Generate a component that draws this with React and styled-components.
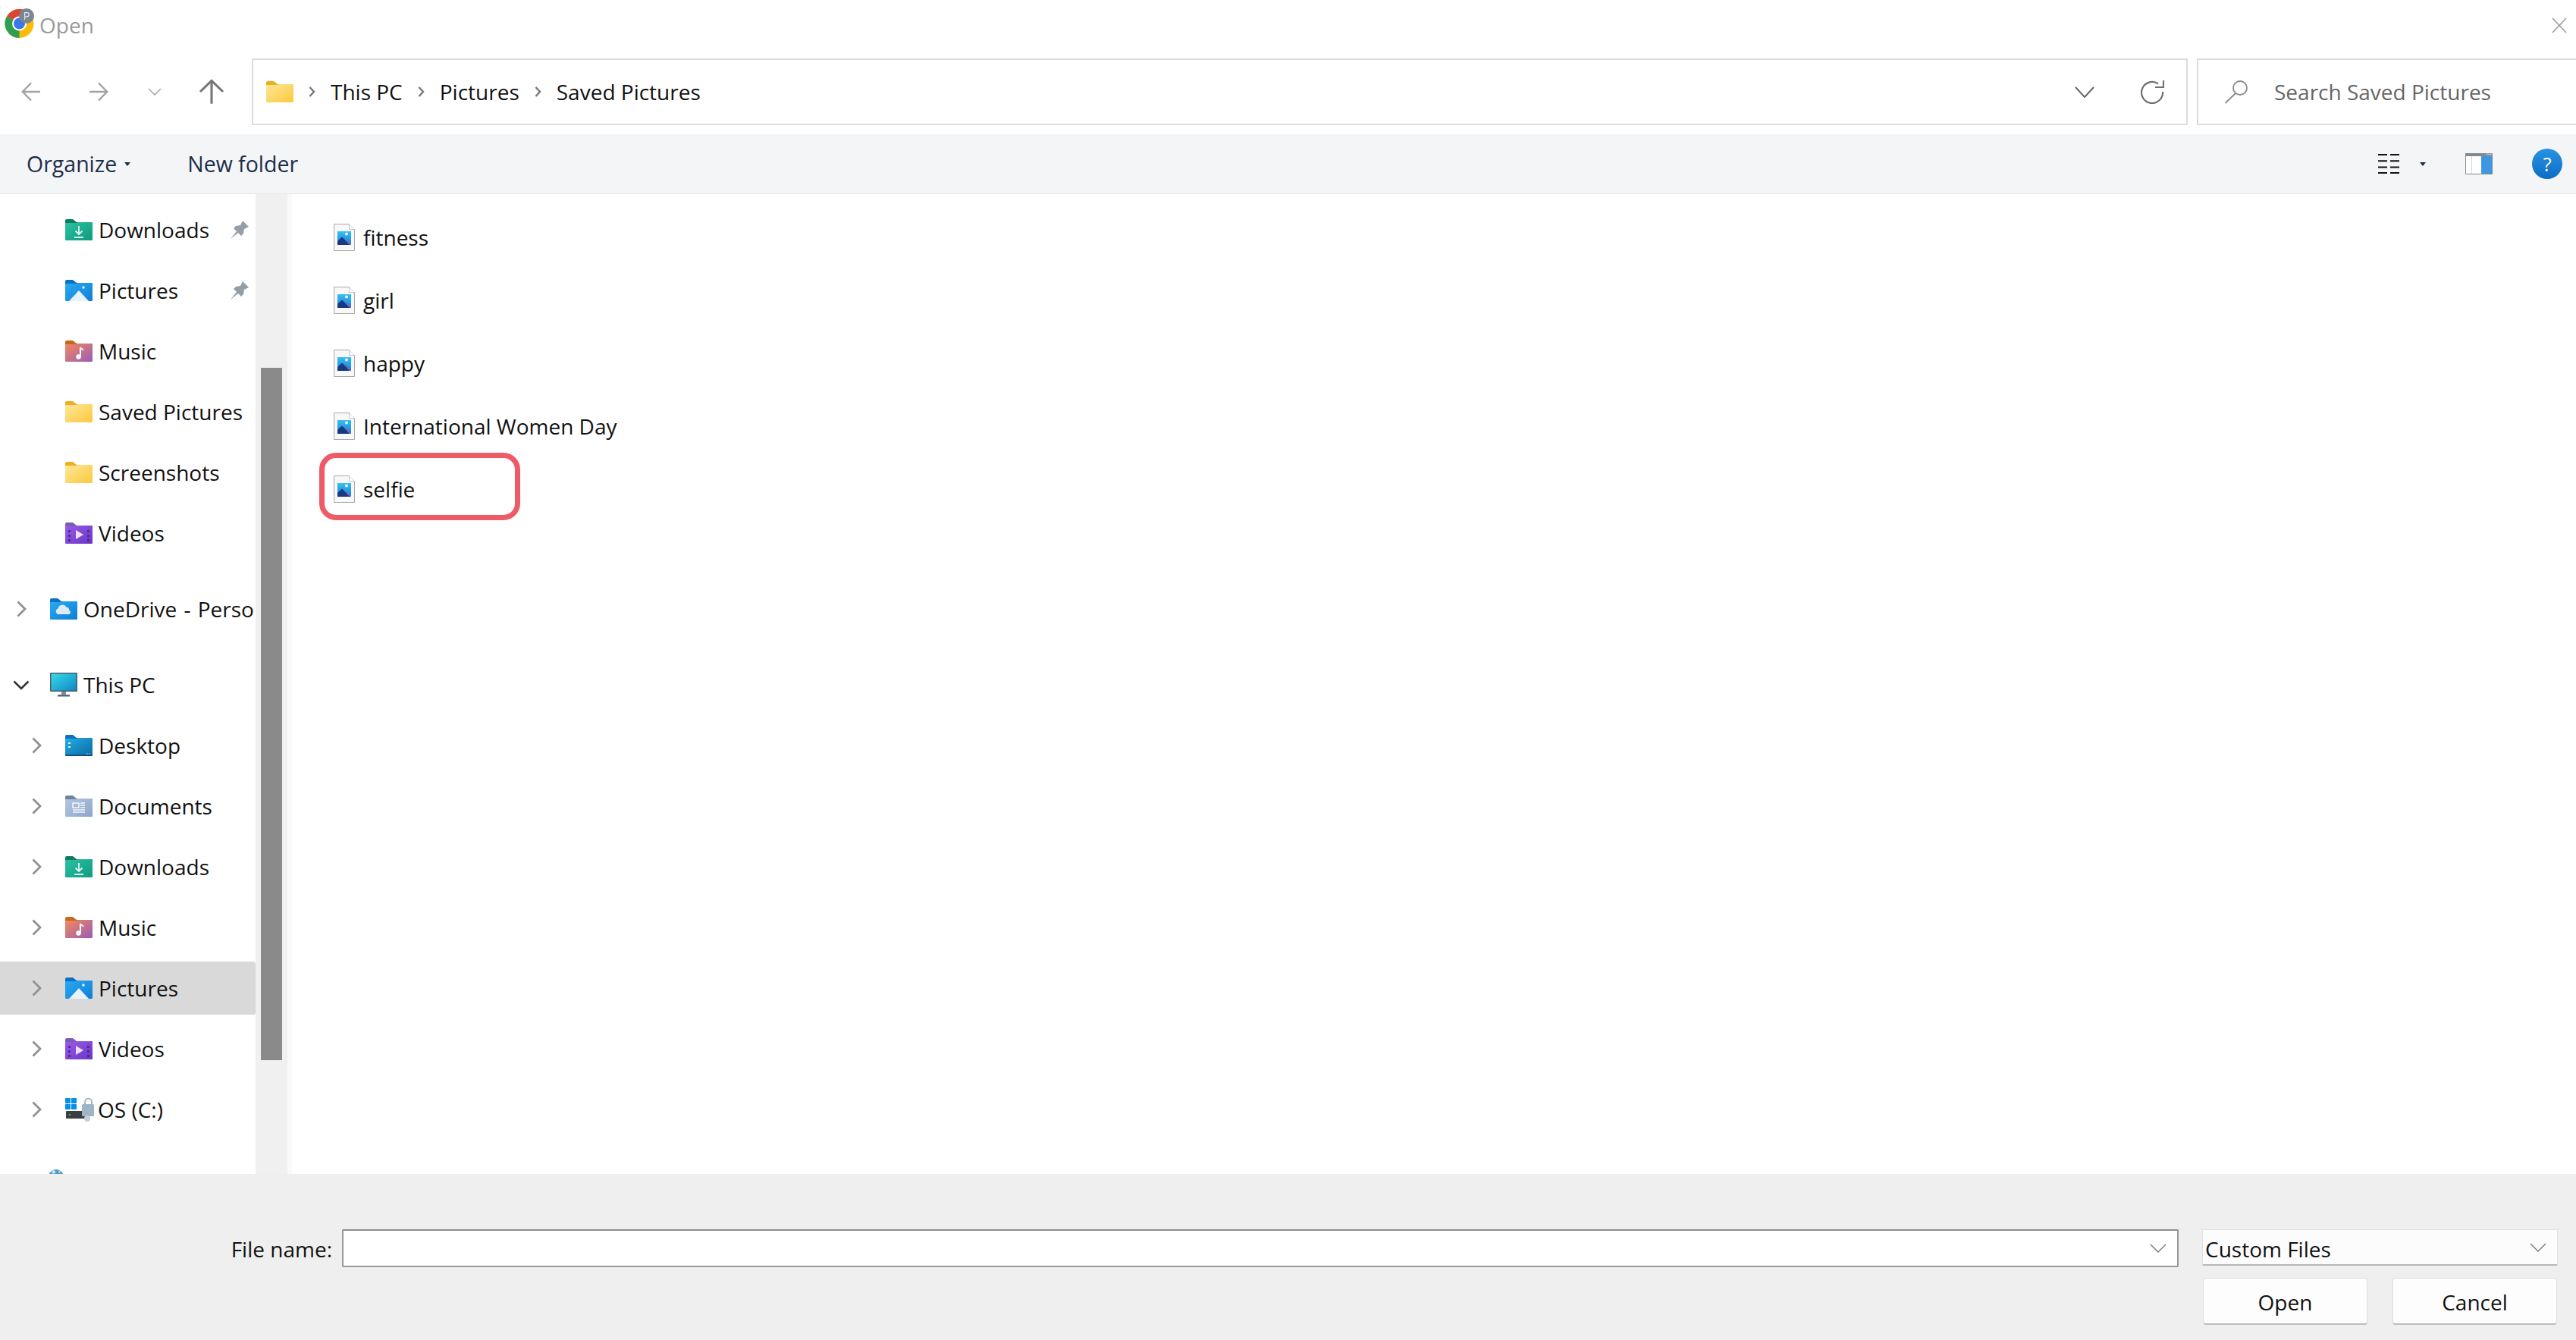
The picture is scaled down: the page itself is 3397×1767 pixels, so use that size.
import React from "react"
import styled, { createGlobalStyle } from "styled-components"

const GlobalStyle = createGlobalStyle`
  html, body {
    margin: 0;
    padding: 0;
    background: #fff;
    overflow: hidden;
  }
  body {
    font-family: "Open Sans", "Noto Sans", "Liberation Sans", sans-serif;
    font-size: 28px;
    color: #111;
  }
`

const Dialog = styled.div`
  display: flex;
  flex-direction: column;
  width: 3397px;
  height: 1767px;
  overflow: hidden;
`

const TitleBar = styled.div`
  display: flex;
  align-items: center;
  height: 66px;
  padding: 0 12px 0 6px;
  color: #9a9a9a;
`

const TitleText = styled.span`
  margin-left: 6px;
  margin-right: auto;
`

const NavBar = styled.div`
  display: flex;
  align-items: stretch;
  height: 88px;
  margin-top: 11px;
  margin-bottom: 12px;
`

const NavSlot = styled.div`
  display: flex;
  align-items: center;
  justify-content: center;
  width: ${p => p.$w}px;
`

const AddressBox = styled.div`
  flex: 1;
  display: flex;
  align-items: center;
  margin-left: 4px;
  padding: 0 29px 0 17px;
  border: 2px solid #dcdcdc;
  gap: 20px;
`

const AddressEnd = styled.div`
  display: flex;
  align-items: center;
  gap: 60px;
  margin-left: auto;
`

const SearchBox = styled.div`
  display: flex;
  align-items: center;
  width: 500px;
  box-sizing: border-box;
  margin-left: 12px;
  padding-left: 34px;
  gap: 34px;
  border: 2px solid #dcdcdc;
  border-right: none;
  color: #666;
`

const Toolbar = styled.div`
  display: flex;
  align-items: center;
  height: 78px;
  padding: 0 18px 0 35px;
  background: #f4f5f7;
  border-bottom: 1px solid #e6e6e6;
  color: #1c2e4a;
  font-size: 28.5px;
`

const ToolbarGroup = styled.div`
  display: flex;
  align-items: center;
  gap: ${p => p.$gap}px;
  margin-left: ${p => p.$auto ? "auto" : `${p.$left || 0}px`};
`

const Caret = styled.span`
  width: 0;
  height: 0;
  border-left: 4px solid transparent;
  border-right: 4px solid transparent;
  border-top: 5px solid #1c2e4a;
`

const Help = styled.span`
  display: flex;
  align-items: center;
  justify-content: center;
  width: 40px;
  height: 40px;
  border-radius: 50%;
  background: linear-gradient(#2a93e2, #0b6cc4);
  color: #fff;
  font-size: 26px;
`

const Main = styled.div`
  flex: 1;
  display: flex;
  min-height: 0;
`

const Sidebar = styled.div`
  width: 337px;
  padding-top: 12px;
  overflow: hidden;
  box-sizing: border-box;
`

const TreeRow = styled.div`
  display: flex;
  align-items: center;
  height: 70px;
  margin-top: ${p => p.$sep ? 30 : 0}px;
  margin-bottom: 10px;
  padding-left: ${p => p.$level === 2 ? 42 : p.$level === 1 ? 17 : 86}px;
  padding-right: 8px;
  background: ${p => p.$selected ? "#d9d9d9" : "transparent"};
  border-radius: 0 3px 3px 0;
  white-space: nowrap;
`

const Chevron = styled.span`
  display: flex;
  justify-content: ${p => p.$level === 2 ? "flex-start" : "center"};
  flex: none;
  width: ${p => p.$level === 2 ? 44 : 22}px;
  margin-right: ${p => p.$level === 2 ? 0 : 27}px;
`

const TreeLabel = styled.span`
  margin-left: ${p => p.$tight ? 5 : 8}px;
  word-spacing: ${p => p.$spaced ? 2 : 0}px;
`

const Pin = styled.span`
  display: flex;
  margin-left: auto;
`

const ScrollTrack = styled.div`
  width: 42px;
  padding: 229px 7px 0;
  box-sizing: border-box;
  background: #f0f0f0;
`

const ScrollThumb = styled.div`
  height: 913px;
  background: #8a8a8a;
`

const Splitter = styled.div`
  width: 6px;
  background: #f9f9f9;
`

const FileList = styled.div`
  flex: 1;
  padding: 21px 0 0 55px;
`

const FileRow = styled.div`
  position: relative;
  display: flex;
  align-items: center;
  gap: 11px;
  height: 72px;
  margin-bottom: 11px;
`

const Highlight = styled.div`
  position: absolute;
  left: -19px;
  top: -12px;
  width: 265px;
  height: 89px;
  box-sizing: border-box;
  border: 7px solid #ee5a66;
  border-radius: 22px;
`

const Footer = styled.div`
  display: grid;
  grid-template-columns: 451px 1fr 31px 469px 24px;
  grid-template-rows: 50px 62px;
  row-gap: 14px;
  height: 219px;
  padding-top: 73px;
  box-sizing: border-box;
  background: #efefef;
`

const FieldLabel = styled.label`
  justify-self: end;
  align-self: center;
  padding-right: 13px;
  margin-top: 1px;
`

const FileField = styled.div`
  display: flex;
  align-items: center;
  padding-right: 14px;
  background: #fff;
  border: 2px solid #9a9a9a;
  border-top-color: #8d8d8d;
  border-radius: 2px;
`

const FileInput = styled.input`
  flex: 1;
  min-width: 0;
  border: none;
  outline: none;
  background: transparent;
  font: inherit;
`

const FilterField = styled.div`
  grid-column: 4;
  display: flex;
  align-items: center;
  justify-content: space-between;
  height: 48px;
  padding: 0 14px 0 3px;
  background: #fcfcfc;
  border: 1px solid #dedede;
  border-bottom: 2px solid #b8b8b8;
  border-radius: 2px;
  box-sizing: border-box;
`

const FilterText = styled.span`
  margin-top: 4px;
`

const ButtonRow = styled.div`
  grid-column: 4;
  grid-row: 2;
  display: flex;
  justify-content: space-between;
  padding: 0 1px;
`

const DialogButton = styled.button`
  width: 217px;
  height: 62px;
  padding: 3px 0 0;
  background: #fdfdfd;
  border: 1px solid #dedede;
  border-bottom: 2px solid #bdbdbd;
  border-radius: 4px;
  font: inherit;
  color: #111;
`

const Arrow = ({ dir, color = "#a2a2a2", w = 26 }) => (
  <svg width={w} height={w} viewBox="0 0 26 26" fill="none" stroke={color} strokeWidth="2.4"
    style={{ transform: dir === "right" ? "rotate(180deg)" : dir === "up" ? "rotate(90deg)" : "none" }}>
    <path d="M25 13H2M13 1.5 1.8 13 13 24.5" />
  </svg>
)

const Vee = ({ w = 18, h = 10, color = "#a8a8a8", sw = 1.6 }) => (
  <svg width={w} height={h} viewBox={`0 0 ${w} ${h}`} fill="none" stroke={color} strokeWidth={sw}>
    <path d={`M1 1 ${w / 2} ${h - 1} ${w - 1} 1`} />
  </svg>
)

const Crumb = () => (
  <svg width="9" height="14" viewBox="0 0 9 14" fill="none" stroke="#777" strokeWidth="2.4">
    <path d="M1.5 1 7 7 1.5 13" />
  </svg>
)

const TreeChevron = ({ open }) => open ? (
  <svg width="22" height="13" viewBox="0 0 22 13" fill="none" stroke="#333" strokeWidth="2.6">
    <path d="M1.5 1.5 11 11 20.5 1.5" />
  </svg>
) : (
  <svg width="13" height="22" viewBox="0 0 13 22" fill="none" stroke="#909090" strokeWidth="2.8">
    <path d="M1.5 1.5 11 11 1.5 20.5" />
  </svg>
)

const ChromeBadge = () => (
  <svg width="40" height="40" viewBox="0 0 40 40" style={{ marginBottom: 4 }}>
    <circle cx="19.5" cy="20" r="19" fill="#fbbc05" />
    <path d="M19.5 20 36 10.500A19 19 0 0 0 3 10.500Z" fill="#dc4437" />
    <path d="M19.5 20 3 10.500A19 19 0 0 0 19.500 39Z" fill="#2f9e50" />
    <circle cx="19.5" cy="20" r="9.500" fill="#fff" />
    <circle cx="19.5" cy="20" r="7.500" fill="#3b78e7" />
    <circle cx="29" cy="10" r="10" fill="#7a8791" />
    <path d="M26.6 15V5.600h3a2.600 2.600 0 0 1 0 5.400h-3" fill="none" stroke="#dfe3e6" strokeWidth="1.3" />
  </svg>
)

const FOLDERS = {
  yellow: ["#efae1f", "#fde79a", "#fbc93d"],
  teal: ["#0f7b62", "#2cc1a1", "#0f9b81"],
  blue: ["#0c6fc2", "#2aa9f2", "#0f7fd4"],
  music: ["#c56a1b", "#f4885a", "#9a5db8"],
  video: ["#7a5bb8", "#9a5be8", "#6a35c4"],
  desktop: ["#0c6fc2", "#22aee0", "#0b6aa8"],
  docs: ["#6f8499", "#b2c6e2", "#8ea7c9"],
}

// shared folder shape: tab on the top left, the kind's glyph drawn on the body
const Folder = ({ kind, children, w = 36 }) => {
  const [tab, from, to] = FOLDERS[kind]
  const id = `folder-${kind}`
  return (
    <svg width={w} height="28" viewBox="0 0 36 28" style={{ flex: "none" }}>
      <defs>
        <linearGradient id={id} x1="0" y1="0" x2="1" y2="1">
          <stop offset="0" stopColor={from} />
          <stop offset="1" stopColor={to} />
        </linearGradient>
      </defs>
      <path d="M0 2a2 2 0 0 1 2-2h8l5 4h21v6H0Z" fill={tab} />
      <path d="M0 5h15l2-1h18a1 1 0 0 1 1 1v22a1 1 0 0 1-1 1H1a1 1 0 0 1-1-1Z" fill={`url(#${id})`} />
      {children}
    </svg>
  )
}

const DownloadsIcon = () => (
  <Folder kind="teal">
    <path d="M18 9v11M13.5 15.5 18 20l4.5-4.5M12 24h12" fill="none" stroke="#dff8f0" strokeWidth="1.8" />
  </Folder>
)

const PicturesIcon = () => (
  <Folder kind="blue">
    <path d="M5 28 18 14l13 14Z" fill="#e8f2fa" />
    <circle cx="24" cy="10" r="1.8" fill="#e8f2fa" />
  </Folder>
)

const MusicIcon = () => (
  <Folder kind="music">
    <path d="M20 9v12.5" stroke="#fff" strokeWidth="2" />
    <circle cx="17.5" cy="21.5" r="3.2" fill="#fff" />
    <path d="M20 9c1 2 3 2 4 4" fill="none" stroke="#fff" strokeWidth="1.6" />
  </Folder>
)

const VideosIcon = () => (
  <Folder kind="video">
    <path d="M14 10v12l10-6Z" fill="#eadffc" />
    <path d="M4 10h3v3H4ZM4 16h3v3H4ZM4 22h3v3H4ZM29 10h3v3h-3ZM29 16h3v3h-3ZM29 22h3v3h-3Z" fill="#4a2c96" />
  </Folder>
)

const DesktopIcon = () => (
  <Folder kind="desktop">
    <path d="M4 10h3v2H4ZM4 15h3v2H4Z" fill="#d8f2fb" />
    <path d="M0 26h36v1a1 1 0 0 1-1 1H1a1 1 0 0 1-1-1Z" fill="#0d4f82" />
    <path d="M28 25h1.500M31 25h1.500" stroke="#d8f2fb" strokeWidth="1" />
  </Folder>
)

const DocumentsIcon = () => (
  <Folder kind="docs">
    <path d="M10 10h8v6h-8ZM20 10h6M20 13h6M20 16h6M10 19h16M10 22h16" fill="none" stroke="#f4f7fb" strokeWidth="1.6" />
  </Folder>
)

const OneDriveIcon = () => (
  <Folder kind="blue">
    <path d="M10 21a4 4 0 0 1 .5-7.5 6 6 0 0 1 11-2 5 5 0 0 1 4 4.500 3 3 0 0 1 0 5Z" fill="#dcecf7" />
  </Folder>
)

const PcIcon = () => (
  <svg width="36" height="32" viewBox="0 0 36 32" style={{ flex: "none" }}>
    <defs>
      <linearGradient id="pc-screen" x1="0" y1="0" x2="1" y2="1">
        <stop offset="0" stopColor="#38dbe8" />
        <stop offset="1" stopColor="#0f86c6" />
      </linearGradient>
    </defs>
    <rect x="0" y="0" width="36" height="25" rx="1" fill="#4d5d68" />
    <rect x="1.500" y="1.500" width="33" height="22" fill="url(#pc-screen)" />
    <rect x="15" y="25" width="6" height="4" fill="#7f8d96" />
    <rect x="10" y="29" width="16" height="2.500" fill="#5b6871" />
  </svg>
)

const DriveIcon = () => (
  <svg width="38" height="32" viewBox="0 0 38 32" style={{ flex: "none" }}>
    <path d="M0 1h7v7H0ZM8 1h7v7H8ZM0 9h7v7H0ZM8 9h7v7H8Z" fill="#0a8fe6" />
    <rect x="1" y="18" width="26" height="10" rx="1" fill="#3a3f42" />
    <circle cx="6" cy="23" r="1" fill="#4ed45b" />
    <path d="M26 11V6a4.500 4.500 0 0 1 9 0v4" fill="none" stroke="#8fa6b6" strokeWidth="1.6" />
    <rect x="22" y="9" width="16" height="16" rx="1.500" fill="#9fb5c6" />
    <circle cx="29" cy="28" r="4" fill="#c4ced6" />
  </svg>
)

// only its top shows above the footer, the tree scrolls on below that
const GlobeIcon = () => (
  <svg width="20" height="20" viewBox="0 0 20 20" style={{ flex: "none", marginLeft: -2, marginBottom: 22 }}>
    <circle cx="10" cy="10" r="10" fill="#4c9fc4" />
    <path d="M6 1c3 .5 4 2 3 3.500S5 6 4 4.500ZM13 1l3 2-2 2Z" fill="#cfe6ef" />
  </svg>
)

const PinIcon = () => (
  <svg width="26" height="26" viewBox="0 0 26 26" fill="#939ea7">
    <path d="M1 25 9 15 5 11 8 8 14 7 17 1 25 9 19 12 18 18 15 21 11 17Z" />
  </svg>
)

const ImageFileIcon = () => (
  <svg width="28" height="36" viewBox="0 0 28 36" style={{ flex: "none" }}>
    <path d="M.5.500h20l7 7v28H.5Z" fill="#f8f8f8" stroke="#a9a9a9" />
    <path d="M20.500.500v7h7" fill="#fff" stroke="#c4c4c4" />
    <defs>
      <linearGradient id="file-sky" x1="0" y1="0" x2="0" y2="1">
        <stop offset="0" stopColor="#36c0f2" />
        <stop offset="1" stopColor="#1b7fd4" />
      </linearGradient>
    </defs>
    <rect x="5" y="10" width="18" height="18" fill="url(#file-sky)" />
    <circle cx="17" cy="13.500" r="2" fill="#e8f6fd" />
    <path d="M12 18 23 25v3H14Z" fill="#5b70cc" />
    <path d="M5 23 11 17.500 21 28H5Z" fill="#16397f" />
  </svg>
)

const SearchIcon = () => (
  <svg width="32" height="32" viewBox="0 0 32 32" fill="none" stroke="#8a8a8a" strokeWidth="1.8">
    <circle cx="21" cy="11" r="9" />
    <path d="M15 18 1.500 31" />
  </svg>
)

const RefreshIcon = () => (
  <svg width="32" height="32" viewBox="0 0 32 32" fill="none" stroke="#6f6f6f" strokeWidth="2.2">
    <path d="M24 5.500A14 14 0 1 0 30 16" />
    <path d="M20 10h11V1" />
  </svg>
)

const ViewsIcon = () => (
  <svg width="28" height="26" viewBox="0 0 28 26" fill="none" stroke="#111" strokeWidth="2">
    <path d="M0 1h12M16 1h12M0 9.300h12M16 9.300h12M0 17.600h12M16 17.600h12M0 25h12M16 25h12" />
  </svg>
)

const PaneIcon = () => (
  <svg width="36" height="28" viewBox="0 0 36 28">
    <rect width="36" height="28" fill="#808a92" />
    <rect x="1" y="4" width="34" height="23" fill="#fff" />
    <rect x="8" y="4" width="1" height="23" fill="#d5d5d5" />
    <rect x="21" y="4" width="14" height="23" fill="#3f97e2" />
    <path d="M28 1.500h1.500M30.500 1.500H32M33 1.500h1.500" stroke="#dfe5ea" strokeWidth="1.500" />
  </svg>
)

const CloseIcon = () => (
  <svg width="20" height="21" viewBox="0 0 20 21" fill="none" stroke="#9c9c9c" strokeWidth="1.6">
    <path d="M1 1 19 20M19 1 1 20" />
  </svg>
)

const TREE = [
  { label: "Downloads", icon: <DownloadsIcon />, pin: true },
  { label: "Pictures", icon: <PicturesIcon />, pin: true },
  { label: "Music", icon: <MusicIcon /> },
  { label: "Saved Pictures", icon: <Folder kind="yellow" /> },
  { label: "Screenshots", icon: <Folder kind="yellow" /> },
  { label: "Videos", icon: <VideosIcon /> },
  { label: "OneDrive - Perso", icon: <OneDriveIcon />, level: 1, sep: true, spaced: true },
  { label: "This PC", icon: <PcIcon />, level: 1, sep: true, open: true },
  { label: "Desktop", icon: <DesktopIcon />, level: 2 },
  { label: "Documents", icon: <DocumentsIcon />, level: 2 },
  { label: "Downloads", icon: <DownloadsIcon />, level: 2 },
  { label: "Music", icon: <MusicIcon />, level: 2 },
  { label: "Pictures", icon: <PicturesIcon />, level: 2, selected: true },
  { label: "Videos", icon: <VideosIcon />, level: 2 },
  { label: "OS (C:)", icon: <DriveIcon />, level: 2, tight: true },
  { label: "", icon: <GlobeIcon />, level: 1, sep: true, hideChevron: true },
]

const FILES = ["fitness", "girl", "happy", "International Women Day", "selfie"]

const App = () => (
  <Dialog>
    <GlobalStyle />
    <TitleBar>
      <ChromeBadge />
      <TitleText>Open</TitleText>
      <CloseIcon />
    </TitleBar>

    <NavBar>
      <NavSlot $w={82}><Arrow dir="left" /></NavSlot>
      <NavSlot $w={96}><Arrow dir="right" /></NavSlot>
      <NavSlot $w={52}><Vee /></NavSlot>
      <NavSlot $w={98}><Arrow dir="up" color="#777" w={34} /></NavSlot>
      <AddressBox>
        <Folder kind="yellow" />
        <Crumb />
        <span>This PC</span>
        <Crumb />
        <span>Pictures</span>
        <Crumb />
        <span>Saved Pictures</span>
        <AddressEnd>
          <Vee w={26} h={15} color="#666" sw={2} />
          <RefreshIcon />
        </AddressEnd>
      </AddressBox>
      <SearchBox>
        <SearchIcon />
        <span>Search Saved Pictures</span>
      </SearchBox>
    </NavBar>

    <Toolbar>
      <ToolbarGroup $gap={10}>
        <span>Organize</span>
        <Caret />
      </ToolbarGroup>
      <ToolbarGroup $left={75}>
        <span>New folder</span>
      </ToolbarGroup>
      <ToolbarGroup $auto $gap={27}>
        <ViewsIcon />
        <Caret />
      </ToolbarGroup>
      <ToolbarGroup $left={52} $gap={52}>
        <PaneIcon />
        <Help>?</Help>
      </ToolbarGroup>
    </Toolbar>

    <Main>
      <Sidebar>
        {TREE.map((row, i) => (
          <TreeRow key={i} $level={row.level} $sep={row.sep} $selected={row.selected}>
            {row.level && (
              <Chevron $level={row.level}>
                {!row.hideChevron && <TreeChevron open={row.open} />}
              </Chevron>
            )}
            {row.icon}
            {row.label && <TreeLabel $tight={row.tight} $spaced={row.spaced}>{row.label}</TreeLabel>}
            {row.pin && <Pin><PinIcon /></Pin>}
          </TreeRow>
        ))}
      </Sidebar>
      <ScrollTrack>
        <ScrollThumb />
      </ScrollTrack>
      <Splitter />
      <FileList>
        {FILES.map(name => (
          <FileRow key={name}>
            <ImageFileIcon />
            <span>{name}</span>
            {name === "selfie" && <Highlight />}
          </FileRow>
        ))}
      </FileList>
    </Main>

    <Footer>
      <FieldLabel>File name:</FieldLabel>
      <FileField>
        <FileInput aria-label="File name" />
        <Vee w={22} h={12} color="#777" sw={1.4} />
      </FileField>
      <FilterField>
        <FilterText>Custom Files</FilterText>
        <Vee w={22} h={12} color="#777" sw={1.4} />
      </FilterField>
      <ButtonRow>
        <DialogButton>Open</DialogButton>
        <DialogButton>Cancel</DialogButton>
      </ButtonRow>
    </Footer>
  </Dialog>
)

export default App
